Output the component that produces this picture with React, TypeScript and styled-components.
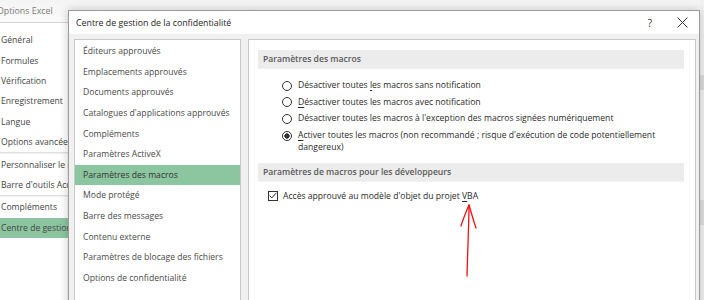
import { createGlobalStyle, styled } from "styled-components";

const GlobalStyle = createGlobalStyle`
  html, body {
    margin: 0;
    padding: 0;
    background: #ffffff;
  }
  body {
    font-family: "Open Sans", "Noto Sans", sans-serif;
    -webkit-font-smoothing: antialiased;
  }
`;

const FONT_SIZE = "8.6px";

const excelNav: { label: string; active?: boolean; lineAfter?: boolean }[] = [
  { label: "Général" },
  { label: "Formules" },
  { label: "Vérification" },
  { label: "Enregistrement" },
  { label: "Langue" },
  { label: "Options avancées", lineAfter: true },
  { label: "Personnaliser le ruban" },
  { label: "Barre d'outils Accès rapide", lineAfter: true },
  { label: "Compléments" },
  { label: "Centre de gestion de la confidentialité", active: true },
];

const trustNav = [
  "Éditeurs approuvés",
  "Emplacements approuvés",
  "Documents approuvés",
  "Catalogues d'applications approuvés",
  "Compléments",
  "Paramètres ActiveX",
  "Paramètres des macros",
  "Mode protégé",
  "Barre des messages",
  "Contenu externe",
  "Paramètres de blocage des fichiers",
  "Options de confidentialité",
];

const ACTIVE_TRUST = "Paramètres des macros";

const App: React.FC = () => {
  return (
    <>
      <GlobalStyle />
      <Page>
        <OptionsWindow>
          <OptionsTitle>Options Excel</OptionsTitle>
          <OptionsNav>
            {excelNav.map((item) => (
              <OptionsNavItem key={item.label} $active={item.active} $lineAfter={item.lineAfter}>
                {item.label}
              </OptionsNavItem>
            ))}
          </OptionsNav>
        </OptionsWindow>

        <ScrollEdge />

        <Dialog>
          <DialogTitleBar>
            <DialogTitle>Centre de gestion de la confidentialité</DialogTitle>
            <TitleButtons>
              <HelpButton>?</HelpButton>
              <CloseButton>
                <svg width="11" height="11" viewBox="0 0 11 11">
                  <path d="M0.5 0.5 L10.5 10.5 M10.5 0.5 L0.5 10.5" stroke="#333" strokeWidth="1" fill="none" />
                </svg>
              </CloseButton>
            </TitleButtons>
          </DialogTitleBar>

          <DialogBody>
            <SidePanel>
              {trustNav.map((label) => (
                <SideItem key={label} $active={label === ACTIVE_TRUST}>
                  {label}
                </SideItem>
              ))}
            </SidePanel>

            <MainPanel>
              <SectionHeader>Paramètres des macros</SectionHeader>
              <RadioList>
                <RadioRow>
                  <Radio />
                  <OptionText>
                    Désactiver toutes <u>l</u>es macros sans notification
                  </OptionText>
                </RadioRow>
                <RadioRow>
                  <Radio />
                  <OptionText>
                    <u>D</u>ésactiver toutes les macros avec notification
                  </OptionText>
                </RadioRow>
                <RadioRow>
                  <Radio />
                  <OptionText>
                    Désactiver toutes les macros à l'exception des macros signées numériquement
                  </OptionText>
                </RadioRow>
                <RadioRow>
                  <Radio $checked />
                  <OptionText>
                    <u>A</u>ctiver toutes les macros (non recommandé ; risque d'exécution de code potentiellement
                    dangereux)
                  </OptionText>
                </RadioRow>
              </RadioList>

              <SectionHeader>Paramètres de macros pour les développeurs</SectionHeader>
              <CheckRow>
                <CheckBox>
                  <svg width="8" height="7" viewBox="0 0 8 7">
                    <path d="M0.6 3.6 L2.9 5.9 L7.4 0.8" stroke="#333" strokeWidth="1" fill="none" />
                  </svg>
                </CheckBox>
                <OptionText>
                  Accès approuvé au modèle d'objet du projet <u>V</u>BA
                </OptionText>
              </CheckRow>
            </MainPanel>
          </DialogBody>
        </Dialog>

        <Arrow width="24" height="80" viewBox="0 0 24 80">
          <path
            d="M12 76 C12.5 60 13 40 13.5 28 C13.8 20 14 12 14 5"
            stroke="#f01010"
            strokeWidth="1.3"
            fill="none"
            strokeLinecap="round"
          />
          <path
            d="M6 26 C8 19 11 12 14 5 C16 12 18 19 21 28"
            stroke="#f01010"
            strokeWidth="1.3"
            fill="none"
            strokeLinecap="round"
            strokeLinejoin="round"
          />
        </Arrow>
      </Page>
    </>
  );
};

export default App;

const Page = styled.div`
  position: relative;
  width: 704px;
  height: 300px;
  overflow: hidden;
  background: #ffffff;
  font-size: ${FONT_SIZE};
`;

const OptionsWindow = styled.div`
  display: flex;
  flex-direction: column;
  width: 704px;
  height: 300px;
  background: #ffffff;
`;

const OptionsTitle = styled.div`
  height: 22px;
  display: flex;
  align-items: center;
  margin-left: -3px;
  color: #7a7a7a;
  font-size: 8.8px;
  border-bottom: 1px solid #d4d4d4;
  background: linear-gradient(#f4f4f4, #fafafa);
`;

const OptionsNav = styled.div`
  display: flex;
  flex-direction: column;
  width: 200px;
  padding-top: 7px;
`;

const OptionsNavItem = styled.div<{ $active?: boolean; $lineAfter?: boolean }>`
  height: 20.4px;
  display: flex;
  align-items: center;
  padding-left: 1px;
  white-space: nowrap;
  color: #444444;
  background: ${({ $active }) => ($active ? "#8cc6a0" : "transparent")};
  ${({ $lineAfter }) =>
    $lineAfter &&
    `
    margin-bottom: 2px;
    box-shadow: 0 1.5px 0 #e2e2e2;
  `}
`;

const ScrollEdge = styled.div`
  position: absolute;
  top: 0;
  right: 0;
  width: 4px;
  height: 300px;
  background: linear-gradient(#f2f2f2 0 75px, #dcdcdc 75px 90px, #f2f2f2 90px 200px, #e0e0e0 200px 225px, #f2f2f2 225px);
`;

const Dialog = styled.div`
  position: absolute;
  left: 68px;
  top: 10px;
  width: 630px;
  height: 300px;
  display: flex;
  flex-direction: column;
  background: #f0f0f0;
  border: 1px solid #9a9a9a;
  box-shadow: 0 0 9px rgba(0, 0, 0, 0.22);
`;

const DialogTitleBar = styled.div`
  height: 23px;
  display: flex;
  align-items: center;
  justify-content: space-between;
  padding: 0 0 0 7px;
  background: #ffffff;
`;

const DialogTitle = styled.div`
  color: #1e1e1e;
  font-size: 8.8px;
  padding-top: 1px;
`;

const TitleButtons = styled.div`
  display: flex;
  align-items: center;
  height: 100%;
`;

const HelpButton = styled.div`
  width: 30px;
  display: flex;
  justify-content: center;
  color: #333;
  font-size: 10px;
`;

const CloseButton = styled.div`
  width: 34px;
  display: flex;
  justify-content: center;
`;

const DialogBody = styled.div`
  flex: 1;
  display: flex;
  gap: 7px;
  padding: 5px 3px 0 5px;
`;

const SidePanel = styled.div`
  width: 165px;
  display: flex;
  flex-direction: column;
  padding-top: 1px;
  background: #ffffff;
  border: 1px solid #c9c9c9;
`;

const SideItem = styled.div<{ $active?: boolean }>`
  height: 20.6px;
  display: flex;
  align-items: center;
  padding-left: 8px;
  white-space: nowrap;
  color: ${({ $active }) => ($active ? "#333333" : "#4a4a4a")};
  background: ${({ $active }) => ($active ? "#8cc6a0" : "transparent")};
`;

const MainPanel = styled.div`
  flex: 1;
  display: flex;
  flex-direction: column;
  padding: 10px 11px 0 9px;
  background: #ffffff;
  border: 1px solid #c9c9c9;
`;

const SectionHeader = styled.div`
  height: 18px;
  display: flex;
  align-items: center;
  padding-left: 5px;
  color: #5a5a5a;
  font-weight: 600;
  background: #ececec;
  border-bottom: 1px solid #f3f3f3;
`;

const RadioList = styled.div`
  display: flex;
  flex-direction: column;
  padding: 10px 0 9px 24px;
  gap: 4.4px;
`;

const RadioRow = styled.div`
  display: flex;
  align-items: flex-start;
  gap: 6px;
`;

const Radio = styled.span<{ $checked?: boolean }>`
  flex: none;
  width: 10px;
  height: 10px;
  margin-top: 1.5px;
  box-sizing: border-box;
  border-radius: 50%;
  border: 1px solid #333;
  background: ${({ $checked }) =>
    $checked ? "radial-gradient(circle, #333 0 2.4px, #fff 2.9px)" : "#fff"};
`;

const OptionText = styled.span`
  color: #2a2a2a;
  line-height: 12.3px;

  u {
    text-decoration-thickness: 1px;
    text-underline-offset: 1.5px;
  }
`;

const CheckRow = styled.div`
  display: flex;
  align-items: center;
  gap: 5px;
  padding: 8px 0 0 10px;
`;

const CheckBox = styled.span`
  flex: none;
  width: 10px;
  height: 10px;
  box-sizing: border-box;
  border: 1px solid #333;
  display: flex;
  align-items: center;
  justify-content: center;
  background: #fff;
`;

const Arrow = styled.svg`
  position: absolute;
  left: 455px;
  top: 200px;
`;
